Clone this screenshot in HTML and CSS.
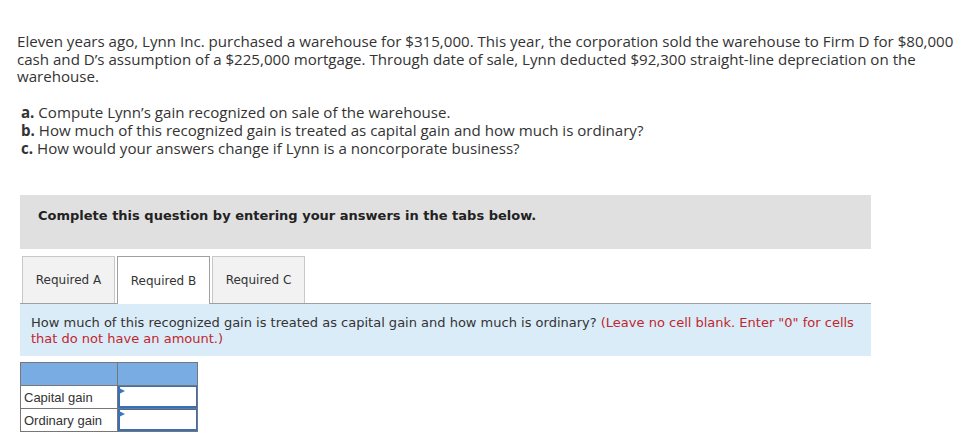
FILE: index.html
```html
<!DOCTYPE html>
<html>
<head>
<meta charset="utf-8">
<link rel="stylesheet" href="styles.css">
</head>
<body>
<div class="page">
  <div class="question">
    <p class="intro">Eleven years ago, Lynn Inc. purchased a warehouse for $315,000. This year, the corporation sold the warehouse to Firm D for $80,000 cash and D’s assumption of a $225,000 mortgage. Through date of sale, Lynn deducted $92,300 straight-line depreciation on the warehouse.</p>
    <ul class="parts">
      <li><b>a.</b> Compute Lynn’s gain recognized on sale of the warehouse.</li>
      <li><b>b.</b> How much of this recognized gain is treated as capital gain and how much is ordinary?</li>
      <li><b>c.</b> How would your answers change if Lynn is a noncorporate business?</li>
    </ul>
  </div>
  <div class="answer">
    <div class="banner">Complete this question by entering your answers in the tabs below.</div>
    <div class="tabs">
      <div class="tab">Required A</div>
      <div class="tab active">Required B</div>
      <div class="tab">Required C</div>
    </div>
    <div class="prompt">How much of this recognized gain is treated as capital gain and how much is ordinary? <span class="hint">(Leave no cell blank. Enter "0" for cells that do not have an amount.)</span></div>
    <table class="grid">
      <tr class="head"><th></th><th></th></tr>
      <tr><td class="label">Capital gain</td><td class="input"><span class="flag"></span></td></tr>
      <tr><td class="label">Ordinary gain</td><td class="input"><span class="flag"></span></td></tr>
    </table>
  </div>
</div>
</body>
</html>
```
FILE: styles.css
```css
* { box-sizing: border-box; }
body { margin: 0; background: #fff; }
.page { padding: 33px 0 0 17px; width: 971px; }
.question { font-family: "Open Sans", sans-serif; font-size: 15.1px; color: #333; width: 942px; }
.intro { margin: 0; line-height: 17.5px; }
.parts { list-style: none; margin: 17.5px 0 0 4px; padding: 0; line-height: 18px; }
.parts b { font-weight: 700; }
.answer { margin-top: 38px; margin-left: 3px; width: 851px; }
.banner { background: #e0e0e0; height: 54px; padding: 13px 0 0 18px; line-height: 16px; font-family: "DejaVu Sans", Verdana, sans-serif; font-weight: bold; font-size: 13px; color: #222; }
.tabs { display: flex; margin-top: 7px; padding-left: 2px; border-bottom: 1px solid #a0a0a0; gap: 2px; }
.tab { width: 93px; height: 47px; display: flex; align-items: center; justify-content: center; background: #f2f2f2; border: 1px solid #c8c8c8; border-bottom: none; font-family: "DejaVu Sans", Verdana, sans-serif; font-size: 12px; color: #333; }
.tab.active { background: #fff; border-color: #a0a0a0; margin-bottom: -1px; height: 48px; }
.prompt { background: #dbecf9; padding: 11px 11px 9px 11px; font-family: "DejaVu Sans", Verdana, sans-serif; font-size: 13px; line-height: 16px; color: #333; }
.hint { color: #c0272d; }
.grid { margin-top: 6px; border-collapse: collapse; font-family: "Liberation Sans", Arial, sans-serif; font-size: 13px; color: #333; }
.grid th, .grid td { border: 1px solid #777; height: 23px; padding: 0; }
.grid th { background: #7aace4; }
.grid th:first-child, .grid td.label { width: 97px; }
.grid td.label { padding-left: 3px; }
.grid td.input { width: 80px; position: relative; }
.grid td.input::after { content: ""; position: absolute; left: 0; top: 0; right: 0; bottom: 0; border: 1px solid #3b6fb3; border-left-width: 2px; border-bottom-width: 2px; }
.flag { position: absolute; left: 1px; top: 2px; width: 0; height: 0; border-top: 3px solid transparent; border-bottom: 3px solid transparent; border-left: 6px solid #3b75c0; z-index: 1; }
```
